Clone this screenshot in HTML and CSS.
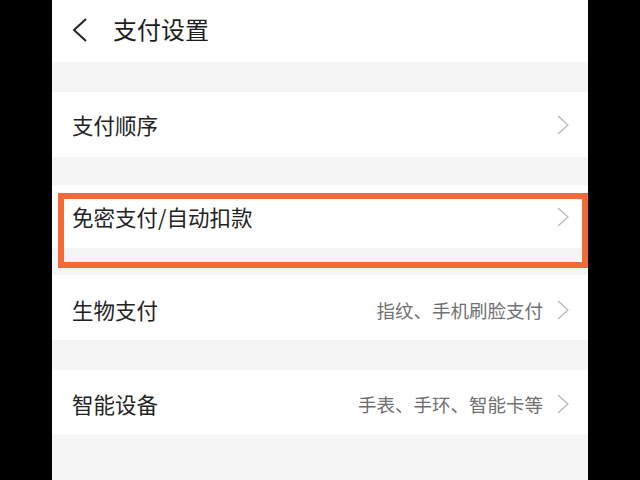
FILE: index.html
```html
<!DOCTYPE html>
<html>
<head>
  <meta charset="utf-8">
  <title>支付设置</title>
  <link rel="stylesheet" href="styles.css">
</head>
<body>
  <div class="phone">
    <div class="header">
      <svg class="back" width="16" height="24" viewBox="0 0 16 24">
        <path d="M14 1 L2 12 L14 23" fill="none" stroke="#222" stroke-width="2"/>
      </svg>
      <span class="title">支付设置</span>
    </div>

    <div class="row row-first">
      <span class="label">支付顺序</span>
      <span class="right">
        <svg class="chev" width="12" height="20" viewBox="0 0 12 20"><path d="M1 1 L11 10 L1 19" fill="none" stroke="#bdbdbd" stroke-width="1.5"/></svg>
      </span>
    </div>

    <div class="row row-mark">
      <span class="label">免密支付/自动扣款</span>
      <span class="right">
        <svg class="chev" width="12" height="20" viewBox="0 0 12 20"><path d="M1 1 L11 10 L1 19" fill="none" stroke="#bdbdbd" stroke-width="1.5"/></svg>
      </span>
      <div class="highlight"></div>
    </div>

    <div class="row row-bio">
      <span class="label">生物支付</span>
      <span class="right">
        <span class="hint">指纹、手机刷脸支付</span>
        <svg class="chev" width="12" height="20" viewBox="0 0 12 20"><path d="M1 1 L11 10 L1 19" fill="none" stroke="#bdbdbd" stroke-width="1.5"/></svg>
      </span>
    </div>

    <div class="row row-last">
      <span class="label">智能设备</span>
      <span class="right">
        <span class="hint">手表、手环、智能卡等</span>
        <svg class="chev" width="12" height="20" viewBox="0 0 12 20"><path d="M1 1 L11 10 L1 19" fill="none" stroke="#bdbdbd" stroke-width="1.5"/></svg>
      </span>
    </div>
  </div>
</body>
</html>
```

FILE: styles.css
```css
html, body {
  margin: 0;
  padding: 0;
  background: #000;
}
body {
  font-family: "Noto Sans CJK SC", "Noto Sans", sans-serif;
}
.phone {
  width: 536px;
  height: 480px;
  margin: 0 auto;
  background: #f5f5f5;
  overflow: hidden;
}
.header {
  height: 62px;
  background: #fff;
  display: flex;
  align-items: center;
  padding-left: 20px;
}
.back {
  display: block;
  margin-top: -2px;
}
.title {
  margin-left: 25px;
  margin-top: -5px;
  font-size: 24px;
  color: #1c1c1c;
}
.row {
  position: relative;
  height: 64px;
  background: #fff;
  display: flex;
  align-items: center;
  justify-content: space-between;
  padding: 0 19px 0 20px;
}
.row-first {
  margin-top: 30px;
  height: 65px;
}
.row-mark {
  margin-top: 28px;
  height: 63px;
}
.row-bio {
  margin-top: 27px;
  height: 65px;
  padding-top: 4px;
  box-sizing: border-box;
}
.row-last {
  margin-top: 30px;
  height: 65px;
  padding-top: 2px;
  box-sizing: border-box;
}
.label {
  font-size: 21.5px;
  color: #222;
}
.right {
  display: flex;
  align-items: center;
}
.hint {
  font-size: 18.5px;
  color: #707070;
  margin-right: 14px;
}
.chev {
  display: block;
}
.highlight {
  position: absolute;
  left: 6px;
  right: 0;
  top: 8px;
  height: 75px;
  border: 6px solid #f26a3a;
  box-sizing: border-box;
}
```
